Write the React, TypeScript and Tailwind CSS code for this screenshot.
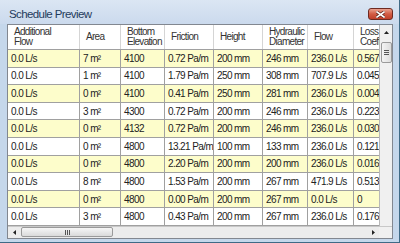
import React from 'react'

const cols = [
  { label: ['Additional', 'Flow'], w: 'w-[72px]' },
  { label: ['Area'], w: 'w-[41px]' },
  { label: ['Bottom', 'Elevation'], w: 'w-[44px]' },
  { label: ['Friction'], w: 'w-[49px]' },
  { label: ['Height'], w: 'w-[49px]' },
  { label: ['Hydraulic', 'Diameter'], w: 'w-[45px]' },
  { label: ['Flow'], w: 'w-[46px]' },
  { label: ['Loss', 'Coefficient'], w: 'w-[70px]' },
]

const rows = [
  ['0.0 L/s', '7 m²', '4100', '0.72 Pa/m', '200 mm', '246 mm', '236.0 L/s', '0.5678'],
  ['0.0 L/s', '1 m²', '4100', '1.79 Pa/m', '250 mm', '308 mm', '707.9 L/s', '0.0455'],
  ['0.0 L/s', '0 m²', '4100', '0.41 Pa/m', '250 mm', '281 mm', '236.0 L/s', '0.0048'],
  ['0.0 L/s', '3 m²', '4300', '0.72 Pa/m', '200 mm', '246 mm', '236.0 L/s', '0.2237'],
  ['0.0 L/s', '0 m²', '4132', '0.72 Pa/m', '200 mm', '246 mm', '236.0 L/s', '0.0309'],
  ['0.0 L/s', '0 m²', '4800', '13.21 Pa/m', '100 mm', '133 mm', '236.0 L/s', '0.1216'],
  ['0.0 L/s', '0 m²', '4800', '2.20 Pa/m', '200 mm', '200 mm', '236.0 L/s', '0.0160'],
  ['0.0 L/s', '8 m²', '4800', '1.53 Pa/m', '200 mm', '267 mm', '471.9 L/s', '0.5135'],
  ['0.0 L/s', '0 m²', '4800', '0.00 Pa/m', '200 mm', '267 mm', '0.0 L/s', '0'],
  ['0.0 L/s', '3 m²', '4800', '0.43 Pa/m', '200 mm', '267 mm', '236.0 L/s', '0.1769'],
]

function CloseButton() {
  return (
    <div className="mt-[8px] w-[25px] h-[12px] rounded-[3px] border border-[#6d2a21] bg-gradient-to-b from-[#e9a08e] via-[#d25b43] to-[#c0402a] flex items-center justify-center">
      <svg width="9" height="7" viewBox="0 0 9 7">
        <path d="M1 1 L8 6 M8 1 L1 6" stroke="#5a2018" strokeWidth="3" strokeLinecap="square" />
        <path d="M1 1 L8 6 M8 1 L1 6" stroke="#ffffff" strokeWidth="1.6" strokeLinecap="square" />
      </svg>
    </div>
  )
}

function Grid() {
  return (
    <div className="flex-1 overflow-hidden bg-white">
      {/* header */}
      <div className="flex h-[25px] border-b border-[#a0a0a0] bg-white">
        {cols.map((c, i) => (
          <div
            key={i}
            className={`${c.w} shrink-0 border-r border-[#d5d5d5] flex flex-col justify-center pl-[6px] text-[10px] leading-[10px] tracking-[-0.7px] text-[#333] whitespace-nowrap overflow-hidden`}
          >
            {c.label.map((l) => (
              <span key={l}>{l}</span>
            ))}
          </div>
        ))}
      </div>
      {rows.map((r, ri) => (
        <div
          key={ri}
          className={`flex h-[17.6px] border-b border-[#a0a0a0] ${ri % 2 === 0 ? 'bg-[#fdfdcb]' : 'bg-white'}`}
        >
          {r.map((v, ci) => (
            <div
              key={ci}
              className={`${cols[ci].w} shrink-0 border-r border-[#a0a0a0] flex items-center pl-[3px] text-[10px] tracking-[-0.6px] text-[#222] whitespace-nowrap overflow-hidden`}
            >
              {v}
            </div>
          ))}
        </div>
      ))}
    </div>
  )
}

export default function App() {
  return (
    <div className="w-[400px] h-[243px] flex flex-col bg-[#c5d7eb] border-r border-b border-[#3f6a86] font-['Liberation_Sans',Arial,sans-serif] overflow-hidden">
      {/* title bar */}
      <div className="h-[24px] shrink-0 flex items-start justify-between pl-[9px] pr-[6px] bg-gradient-to-b from-[#dbe6f3] to-[#cbdaed]">
        <span className="mt-[8px] text-[11.5px] leading-[12px] tracking-[-0.6px] text-[#1f3b5c]">Schedule Preview</span>
        <CloseButton />
      </div>
      {/* client */}
      <div className="flex-1 flex flex-col pl-[7px] pr-[6px] pb-[5px]">
        <div className="flex-1 flex flex-col border border-[#828790] bg-white overflow-hidden">
          <div className="flex-1 flex overflow-hidden">
            <Grid />
            {/* vertical scrollbar */}
            <div className="w-[13px] shrink-0 border-l border-[#b8b8b8] bg-[#f0f0f0] flex flex-col items-center">
              <div className="h-[14px] flex items-center justify-center">
                <svg width="5" height="3" viewBox="0 0 5 3"><path d="M0 3 L2.5 0 L5 3 Z" fill="#222" /></svg>
              </div>
              <div className="mt-[3px] w-[11px] h-[21px] rounded-[2px] border border-[#9a9a9a] bg-gradient-to-r from-[#f4f4f4] to-[#dcdcdc] flex flex-col items-center justify-center gap-[1px]">
                <div className="w-[5px] h-[1px] bg-[#555]" />
                <div className="w-[5px] h-[1px] bg-[#555]" />
                <div className="w-[5px] h-[1px] bg-[#555]" />
              </div>
            </div>
          </div>
          {/* horizontal scrollbar */}
          <div className="h-[12px] shrink-0 flex border-t border-[#c8c8c8] bg-[#ececec]">
            <div className="flex-1 flex items-center">
              <div className="w-[12px] flex items-center justify-center">
                <svg width="3" height="5" viewBox="0 0 3 5"><path d="M3 0 L0 2.5 L3 5 Z" fill="#222" /></svg>
              </div>
              <div className="ml-[1px] w-[92px] h-[10px] rounded-[2px] border border-[#9a9a9a] bg-gradient-to-b from-[#f6f6f6] to-[#dadada] flex items-center justify-center gap-[1px]">
                <div className="w-[1px] h-[5px] bg-[#555]" />
                <div className="w-[1px] h-[5px] bg-[#555]" />
                <div className="w-[1px] h-[5px] bg-[#555]" />
              </div>
              <div className="flex-1" />
              <div className="w-[12px] flex items-center justify-center">
                <svg width="3" height="5" viewBox="0 0 3 5"><path d="M0 0 L3 2.5 L0 5 Z" fill="#222" /></svg>
              </div>
            </div>
            <div className="w-[13px] shrink-0 bg-[#f0f0f0]" />
          </div>
        </div>
      </div>
    </div>
  )
}
